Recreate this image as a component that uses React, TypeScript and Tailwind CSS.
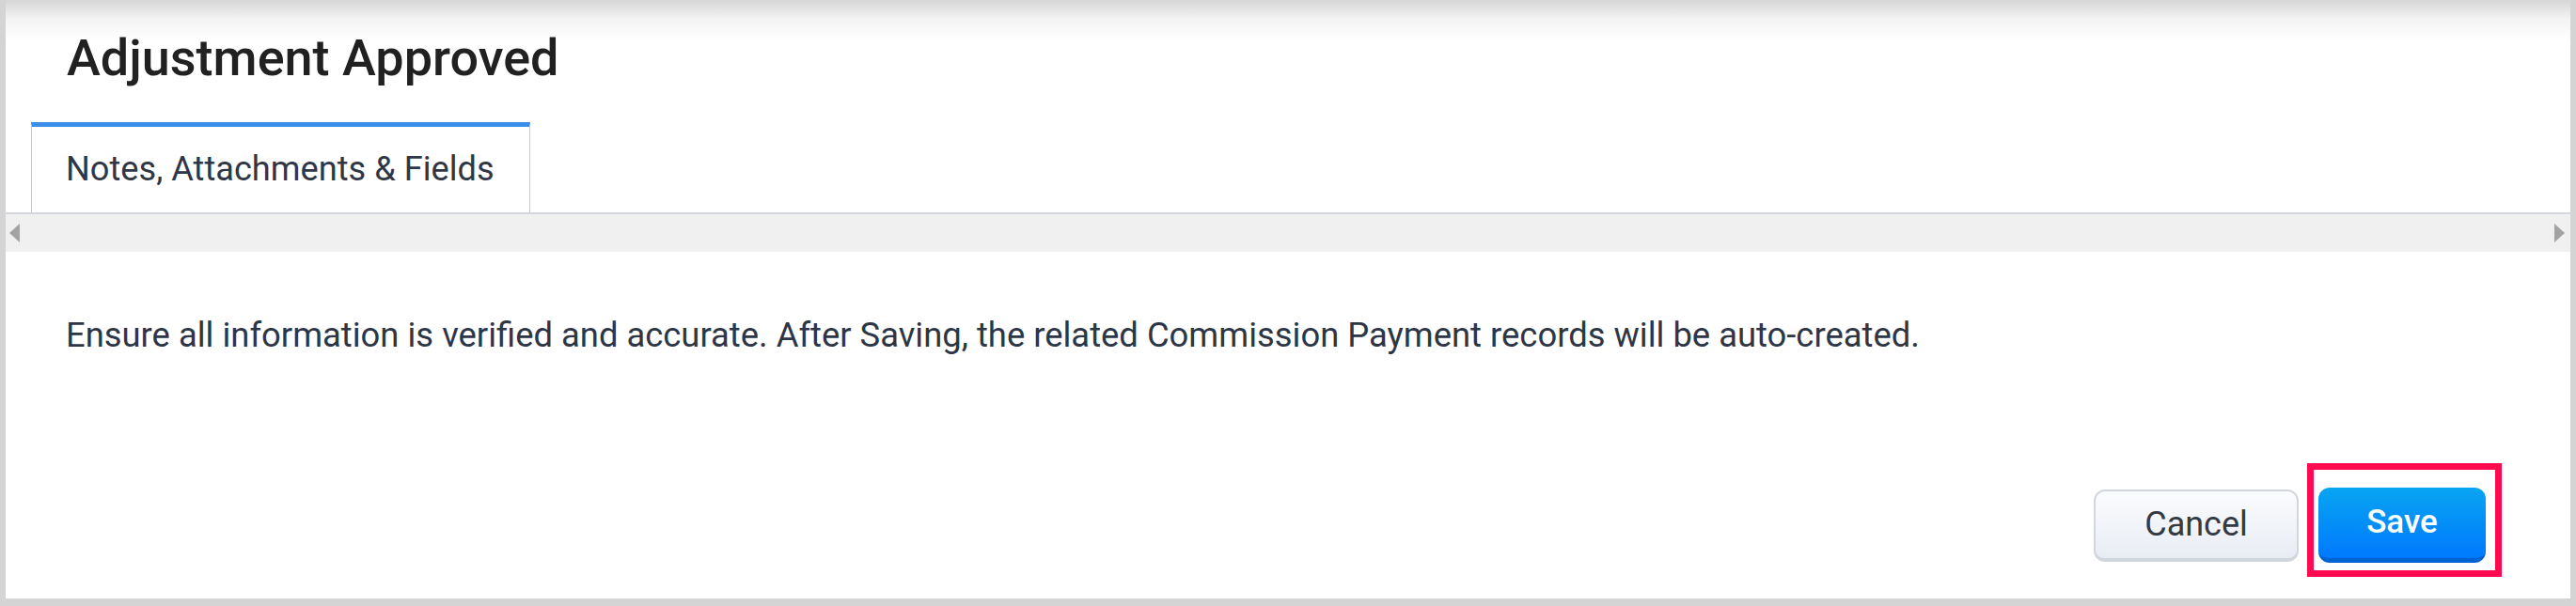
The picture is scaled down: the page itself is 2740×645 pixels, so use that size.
import React from 'react';

const Arrow = ({ dir }: { dir: 'left' | 'right' }) => (
  <svg width="11" height="20" viewBox="0 0 11 20" className="block">
    {dir === 'left' ? (
      <polygon points="11,0 11,20 0,10" fill="#a3a3a3" />
    ) : (
      <polygon points="0,0 0,20 11,10" fill="#a3a3a3" />
    )}
  </svg>
);

const App = () => {
  return (
    <div className="w-[2740px] h-[645px] bg-[#d4d4d4] px-[6px] pb-[8px] font-['Roboto',sans-serif]">
      <div className="h-full flex flex-col bg-[linear-gradient(#d6d6d6,#f3f3f3_20px,#ffffff_44px)]">
        <h1 className="pl-[65px] pt-[32px] text-[54px] leading-[60px] font-medium text-[#212121]">
          Adjustment Approved
        </h1>

        <div className="mt-[38px] pl-[27px] flex">
          <div className="h-[96px] w-[531px] bg-white border-t-[5px] border-t-[#3a8ee8] border-x border-x-[#c6cbd2] pl-[36px] flex items-center text-[36.2px] text-[#2f3747]">
            Notes, Attachments &amp; Fields
          </div>
        </div>

        <div className="h-[42px] border-t-2 border-t-[#d3d7dd] bg-[#f0f0f0] flex items-center justify-between pl-[4px] pr-[6px]">
          <Arrow dir="left" />
          <Arrow dir="right" />
        </div>

        <p className="mt-[69px] pl-[64px] text-[36.4px] leading-[40px] text-[#2d3646]">
          Ensure all information is verified and accurate. After Saving, the related Commission Payment records will be auto-created.
        </p>

        <div className="mt-auto pb-[38px] pr-[90px] flex justify-end items-center gap-[21px]">
          <button className="w-[218px] h-[77px] rounded-[12px] border-2 border-b-4 border-[#d2d6df] bg-[linear-gradient(#fbfcfe,#e8ecf3)] text-[36px] text-[#323a46]">
            Cancel
          </button>
          <div className="relative">
            <button className="w-[178px] h-[80px] rounded-[12px] border-b-[5px] border-b-[#0063d4] bg-[linear-gradient(#08a5f2,#0079fd)] text-[35px] font-medium text-white">
              Save
            </button>
            <div className="absolute -left-[12px] -right-[17px] -top-[26px] -bottom-[15px] border-[7px] border-[#ff0a50]" />
          </div>
        </div>
      </div>
    </div>
  );
};

export default App;
